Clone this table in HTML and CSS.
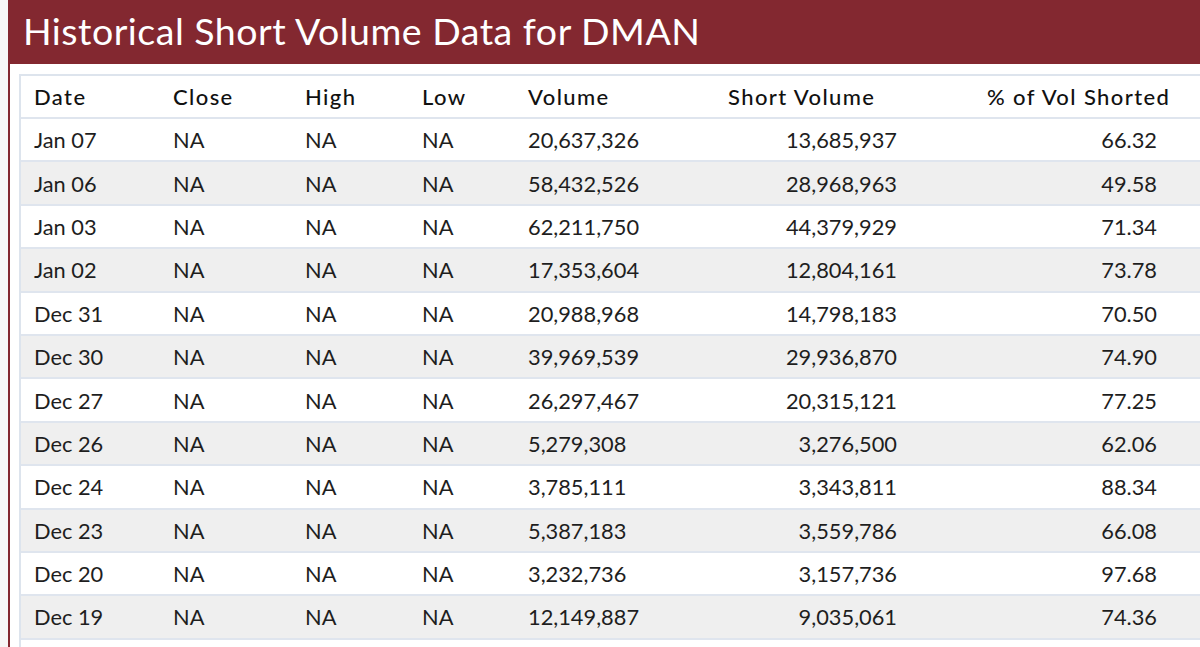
FILE: index.html
```html
<!DOCTYPE html>
<html lang="en">
<head>
<meta charset="utf-8">
<title>Historical Short Volume Data for DMAN</title>
<link rel="stylesheet" href="styles.css">
</head>
<body>
<section class="panel">
  <h1 class="panel-title">Historical Short Volume Data for DMAN</h1>
  <div class="panel-body">
    <div class="table-wrap">
    <table class="data-table">
      <colgroup>
        <col class="c-date"><col class="c-close"><col class="c-high"><col class="c-low"><col class="c-vol"><col class="c-short"><col class="c-pct">
      </colgroup>
      <thead>
        <tr><th>Date</th><th>Close</th><th>High</th><th>Low</th><th>Volume</th><th>Short Volume</th><th>% of Vol Shorted</th></tr>
      </thead>
      <tbody>
        <tr><td>Jan 07</td><td>NA</td><td>NA</td><td>NA</td><td>20,637,326</td><td class="num-short">13,685,937</td><td class="num-pct">66.32</td></tr>
        <tr><td>Jan 06</td><td>NA</td><td>NA</td><td>NA</td><td>58,432,526</td><td class="num-short">28,968,963</td><td class="num-pct">49.58</td></tr>
        <tr><td>Jan 03</td><td>NA</td><td>NA</td><td>NA</td><td>62,211,750</td><td class="num-short">44,379,929</td><td class="num-pct">71.34</td></tr>
        <tr><td>Jan 02</td><td>NA</td><td>NA</td><td>NA</td><td>17,353,604</td><td class="num-short">12,804,161</td><td class="num-pct">73.78</td></tr>
        <tr><td>Dec 31</td><td>NA</td><td>NA</td><td>NA</td><td>20,988,968</td><td class="num-short">14,798,183</td><td class="num-pct">70.50</td></tr>
        <tr><td>Dec 30</td><td>NA</td><td>NA</td><td>NA</td><td>39,969,539</td><td class="num-short">29,936,870</td><td class="num-pct">74.90</td></tr>
        <tr><td>Dec 27</td><td>NA</td><td>NA</td><td>NA</td><td>26,297,467</td><td class="num-short">20,315,121</td><td class="num-pct">77.25</td></tr>
        <tr><td>Dec 26</td><td>NA</td><td>NA</td><td>NA</td><td>5,279,308</td><td class="num-short">3,276,500</td><td class="num-pct">62.06</td></tr>
        <tr><td>Dec 24</td><td>NA</td><td>NA</td><td>NA</td><td>3,785,111</td><td class="num-short">3,343,811</td><td class="num-pct">88.34</td></tr>
        <tr><td>Dec 23</td><td>NA</td><td>NA</td><td>NA</td><td>5,387,183</td><td class="num-short">3,559,786</td><td class="num-pct">66.08</td></tr>
        <tr><td>Dec 20</td><td>NA</td><td>NA</td><td>NA</td><td>3,232,736</td><td class="num-short">3,157,736</td><td class="num-pct">97.68</td></tr>
        <tr><td>Dec 19</td><td>NA</td><td>NA</td><td>NA</td><td>12,149,887</td><td class="num-short">9,035,061</td><td class="num-pct">74.36</td></tr>
      </tbody>
    </table>
    </div>
  </div>
</section>
</body>
</html>
```
FILE: styles.css
```css
html, body {
  margin: 0;
  padding: 0;
}
body {
  background: #f7f7f7;
  font-family: Lato, "Noto Sans", "Liberation Sans", sans-serif;
  color: #1c1c1c;
  overflow: hidden;
  height: 647px;
}
.panel {
  margin-left: 8px;
  border-left: 2px solid #832830;
  background: #ffffff;
  height: 647px;
  box-sizing: border-box;
}
.panel-title {
  margin: 0;
  background: #832830;
  color: #ffffff;
  font-weight: 400;
  font-size: 37.5px;
  letter-spacing: 0.5px;
  height: 64px;
  line-height: 62px;
  padding-left: 13px;
  box-sizing: border-box;
  white-space: nowrap;
}
.panel-body {
  padding: 10px 0 0 9px;
}
.table-wrap {
  border-top: 2px solid #dde4ed;
  border-left: 2px solid #dde4ed;
  height: 600px;
  width: 1200px;
}
.data-table {
  border-collapse: collapse;
  table-layout: fixed;
  width: 1200px;
}
.c-date { width: 137px; }
.c-close { width: 132px; }
.c-high { width: 117px; }
.c-low { width: 106px; }
.c-vol { width: 200px; }
.c-short { width: 259px; }
.c-pct { width: 249px; }
.data-table th,
.data-table td {
  text-align: left;
  padding: 0 0 0 15px;
  border-bottom: 2px solid #dfe5ee;
  white-space: nowrap;
}
.data-table th:first-child,
.data-table td:first-child {
  padding-left: 13px;
}
.data-table th {
  height: 41px;
  font-size: 22px;
  font-weight: 500;
  letter-spacing: 1.4px;
  color: #111111;
}
.data-table td {
  height: 41.4px;
  font-size: 21.8px;
  font-weight: 400;
  color: #1e1e1e;
}
.data-table tbody tr:nth-child(even) td {
  background: #efefef;
}
.data-table td.num-short {
  text-align: right;
  padding: 0 75px 0 0;
}
.data-table td.num-pct {
  text-align: right;
  padding: 0 64px 0 0;
}
```
